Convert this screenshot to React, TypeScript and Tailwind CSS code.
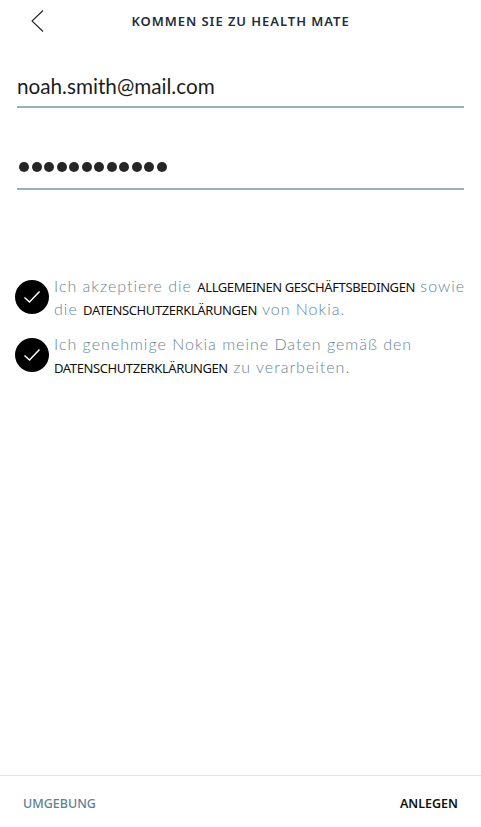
import React from "react";

function CheckBadge() {
  return (
    <div className="flex h-[34px] w-[34px] shrink-0 items-center justify-center rounded-full bg-black">
      <svg width="20" height="16" viewBox="0 0 20 16" fill="none">
        <path d="M2.5 8.5 L7.5 13 L17.5 2.5" stroke="white" strokeWidth="1.5" />
      </svg>
    </div>
  );
}

function Terms({ children }: { children: React.ReactNode }) {
  return <span className="font-['Noto_Sans',sans-serif] text-[13px] font-normal leading-none tracking-[-0.4px] text-[#111]">{children}</span>;
}

export default function App() {
  return (
    <div className="flex h-[827px] w-[481px] flex-col bg-white font-['Lato',sans-serif]">
      <header className="relative flex h-[43px] items-center justify-center">
        <svg className="absolute left-[30px] top-[9px]" width="15" height="24" viewBox="0 0 15 24" fill="none">
          <path d="M13 1.5 L2 12 L13 22.5" stroke="#222" strokeWidth="1.1" />
        </svg>
        <h1 className="font-['Noto_Sans',sans-serif] text-[13px] font-semibold tracking-[0.95px] text-[#1f2d3a]">KOMMEN SIE ZU HEALTH MATE</h1>
      </header>

      <div className="mx-[17px] mt-[25px] h-[40px] border-b-2 border-[#9ab0bc] text-[20.7px] leading-[37px] text-[#1c1c1c]">
        noah.smith@mail.com
      </div>
      <div className="mx-[17px] mt-[33px] flex h-[49px] items-center gap-[2.5px] border-b-2 border-[#9ab0bc] pl-[2px] pt-[5px]">
        {Array.from({ length: 12 }).map((_, i) => (
          <span key={i} className="h-[10px] w-[10px] rounded-full bg-[#262626]" />
        ))}
      </div>

      <div className="mt-[84px] flex flex-col gap-[12px] pl-[15px] pr-[17px] text-[16px] font-light leading-[23px] tracking-[1px] text-[#64859a]">
        <div className="flex items-center gap-[5px]">
          <CheckBadge />
          <p className="whitespace-nowrap">
            Ich akzeptiere die <Terms>ALLGEMEINEN GESCHÄFTSBEDINGEN</Terms> sowie
            <br />
            die <Terms>DATENSCHUTZERKLÄRUNGEN</Terms> von Nokia.
          </p>
        </div>
        <div className="flex items-center gap-[5px]">
          <CheckBadge />
          <p className="whitespace-nowrap">
            Ich genehmige Nokia meine Daten gemäß den
            <br />
            <Terms>DATENSCHUTZERKLÄRUNGEN</Terms> zu verarbeiten.
          </p>
        </div>
      </div>

      <footer className="mt-auto flex h-[52px] items-center justify-between border-t border-[#e4e4e4] px-[23px] pt-[6px] font-['Noto_Sans',sans-serif] text-[12.5px] font-medium">
        <span className="text-[#5f7f92]">UMGEBUNG</span>
        <span className="font-semibold text-[#111]">ANLEGEN</span>
      </footer>
    </div>
  );
}
